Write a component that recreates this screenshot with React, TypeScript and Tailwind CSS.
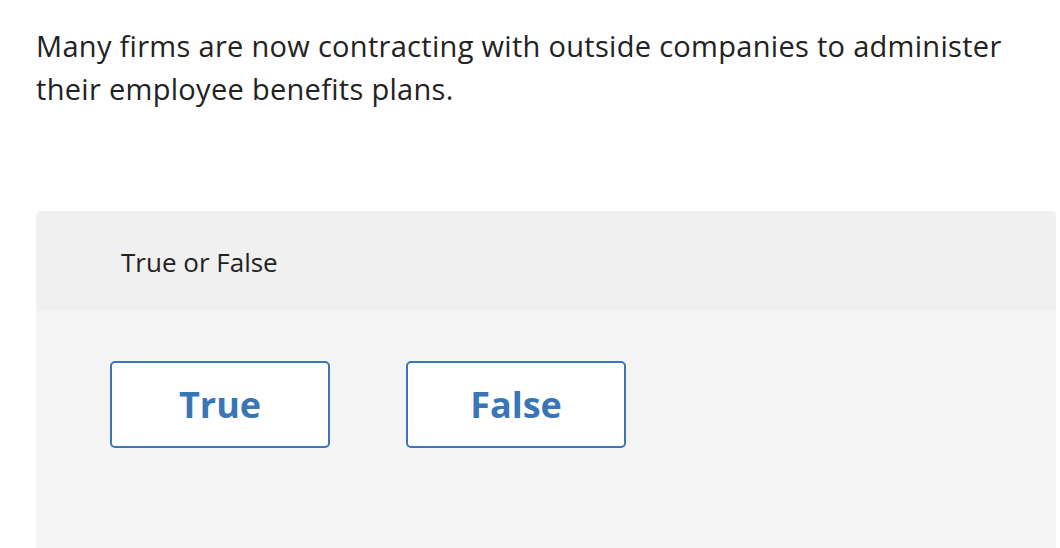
export default function App() {
  return (
    <div className="min-h-[548px] bg-white pl-[36px] pr-[4px] pt-[24px] font-['Open_Sans',sans-serif] text-[#222]">
      <p className="text-[29px] leading-[43px] tracking-[0.3px] whitespace-nowrap">
        Many firms are now contracting with outside companies to administer
        <br />
        their employee benefits plans.
      </p>
      <div className="mt-[101px] rounded-t-[5px] overflow-hidden">
        <div className="h-[100px] bg-[#f0f0f0] pl-[85px] flex items-center">
          <span className="text-[26px] pt-[2px]">True or False</span>
        </div>
        <div className="bg-[#f5f5f5] h-[240px] pl-[74px] pt-[50px] flex gap-[76px] items-start">
          {['True', 'False'].map((label) => (
            <button
              key={label}
              className="w-[220px] h-[87px] bg-white border-2 border-[#3a76b6] rounded-[5px] text-[#3a76b6] text-[36px] font-bold"
            >
              {label}
            </button>
          ))}
        </div>
      </div>
    </div>
  );
}
